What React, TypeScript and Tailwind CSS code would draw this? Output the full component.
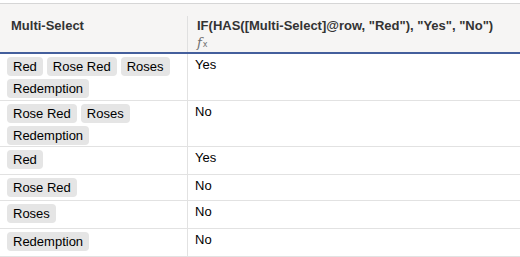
type Row = {
  tags: string[];
  result: string;
  h: string;
};

const rows: Row[] = [
  { tags: ["Red", "Rose Red", "Roses", "Redemption"], result: "Yes", h: "h-[47px]" },
  { tags: ["Rose Red", "Roses", "Redemption"], result: "No", h: "h-[46px]" },
  { tags: ["Red"], result: "Yes", h: "h-[28px]" },
  { tags: ["Rose Red"], result: "No", h: "h-[26px]" },
  { tags: ["Roses"], result: "No", h: "h-[28px]" },
  { tags: ["Redemption"], result: "No", h: "h-[28px]" },
];

function Chip({ label }: { label: string }) {
  return (
    <span className="h-[19px] leading-[19px] px-[6px] rounded-[4px] bg-[#e5e5e5] text-black whitespace-nowrap">
      {label}
    </span>
  );
}

export default function App() {
  return (
    <div className="w-[520px] h-[257px] overflow-hidden bg-white pt-[3px] font-['Liberation_Sans',Arial,sans-serif] text-[13px] text-black">
      {/* header */}
      <div className="flex pt-[12px] bg-[#f6f5f4] border-t border-[#d6d6d6] border-b-2 border-b-[#445f9c]">
        <div className="w-[188px] h-9 shrink-0 border-r border-[#e0e0e0] pl-[11px] pt-[2px] leading-4 font-bold text-[#333]">
          Multi-Select
        </div>
        <div className="flex-1 h-9 pl-[9px] pt-[2px] leading-4 font-bold text-[#333] whitespace-nowrap">
          <div>IF(HAS([Multi-Select]@row, "Red"), "Yes", "No")</div>
          <div className="mt-[2px] flex items-end text-[#6f6f6f] font-normal leading-[14px]">
            <span className="font-['DejaVu_Serif',serif] italic text-[13px]">f</span>
            <span className="font-['DejaVu_Sans',sans-serif] text-[8px] leading-[10px] ml-[1px]">x</span>
          </div>
        </div>
      </div>

      {/* rows */}
      {rows.map((r, i) => (
        <div key={i} className={`flex border-b border-[#e2e2e2] ${r.h}`}>
          <div className="w-[188px] shrink-0 border-r border-[#e2e2e2] px-[7px] pt-[3px] flex flex-wrap content-start gap-x-[4px] gap-y-[3px]">
            {r.tags.map((t) => (
              <Chip key={t} label={t} />
            ))}
          </div>
          <div className="flex-1 pl-[7px] pt-[3px] leading-4">{r.result}</div>
        </div>
      ))}
    </div>
  );
}
